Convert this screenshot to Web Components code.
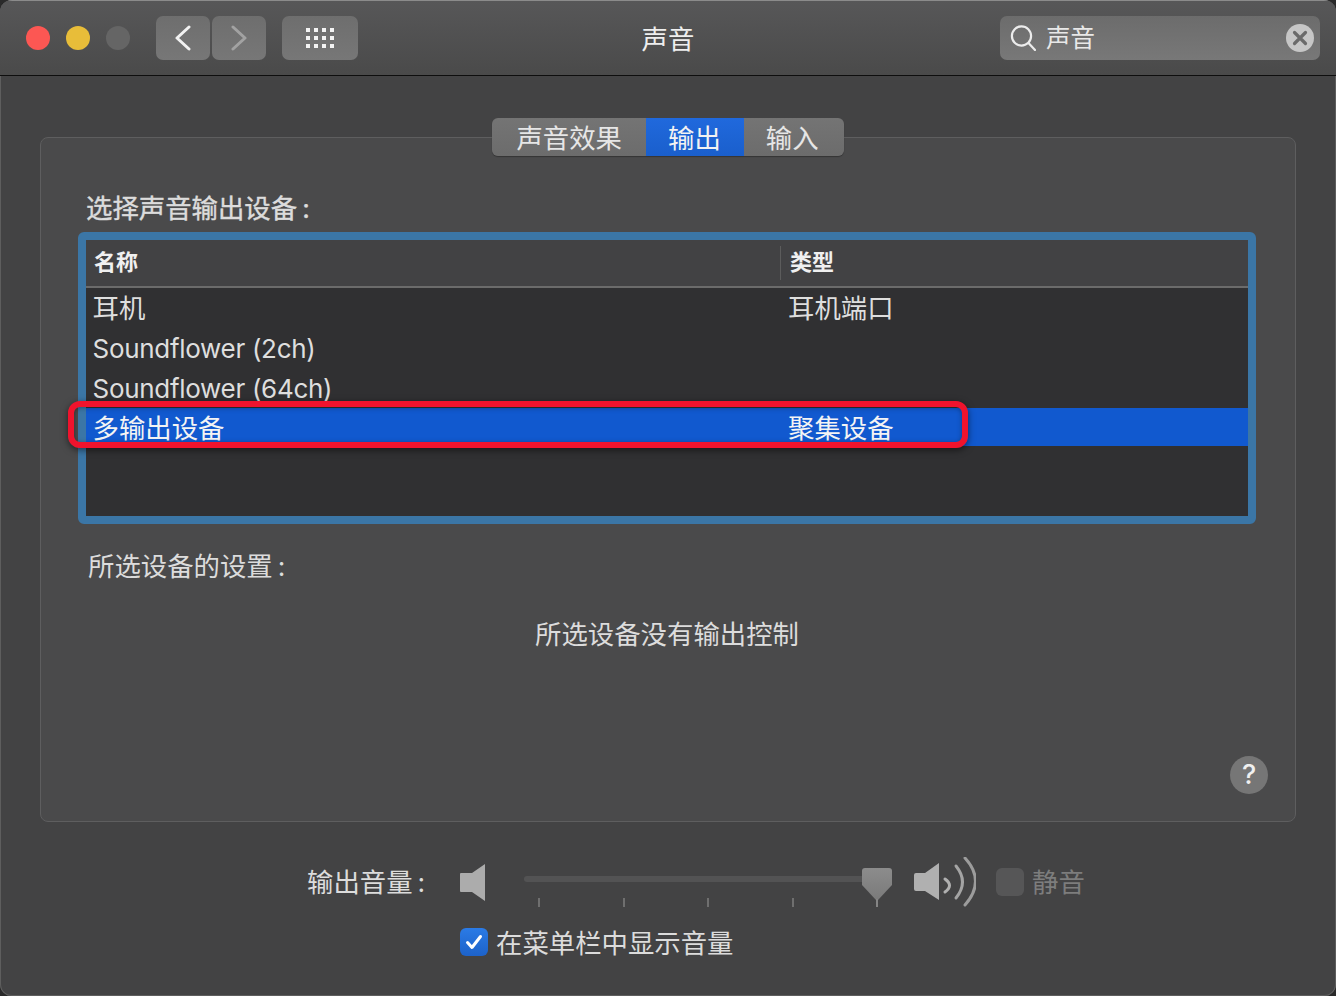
<!DOCTYPE html>
<html lang="zh">
<head>
<meta charset="utf-8">
<title>声音</title>
<style>
  html, body { margin: 0; padding: 0; background: #2a2a2a; }
  body { width: 1336px; height: 996px; overflow: hidden; font-family: Inter, "Noto Sans CJK SC", sans-serif; color: #dcdcdc; }
  .latin { font-size: 26px; letter-spacing: -.3px; }
</style>
</head>
<body>
<sound-window>
  <title-bar slot="top" heading="声音" query="声音"></title-bar>
  <tab-strip>
    <span>声音效果</span>
    <span data-active>输出</span>
    <span>输入</span>
  </tab-strip>
  <settings-panel>
    <device-table>
      <device-row><span>耳机</span><span slot="kind">耳机端口</span></device-row>
      <device-row><span class="latin">Soundflower (2ch)</span></device-row>
      <device-row><span class="latin">Soundflower (64ch)</span></device-row>
      <device-row selected><span>多输出设备</span><span slot="kind">聚集设备</span></device-row>
    </device-table>
  </settings-panel>
  <volume-controls></volume-controls>
</sound-window>

<script>
const FONT = 'Inter, "Noto Sans CJK SC", sans-serif';

class SoundWindow extends HTMLElement {
  connectedCallback() {
    this.attachShadow({ mode: 'open' });
    this.shadowRoot.innerHTML = `
      <style>
        :host { display: flex; flex-direction: column; width: 1336px; height: 996px; background: #434344; border-radius: 12px; overflow: hidden; box-shadow: inset 1px 0 #5e5e5e, inset -1px 0 #5e5e5e, inset 0 -1px #5e5e5e; }
        main { flex: 1; padding: 42px 40px 0; display: flex; flex-direction: column; }
      </style>
      <slot name="top"></slot>
      <main><slot></slot></main>
    `;
  }
}

class TitleBar extends HTMLElement {
  connectedCallback() {
    const heading = this.getAttribute('heading');
    const query = this.getAttribute('query');
    this.attachShadow({ mode: 'open' });
    this.shadowRoot.innerHTML = `
      <style>
        :host { display: block; box-sizing: border-box; height: 76px; border-top: 1px solid #8b8b8b; border-bottom: 1px solid #0e0e0e; background: linear-gradient(#575758, #4a4a4a); }
        .bar { display: grid; grid-template-columns: 1fr auto 1fr; align-items: center; height: 74px; padding: 0 16px; }
        .left { display: flex; align-items: center; padding-left: 10px; }
        .dot { width: 24px; height: 24px; border-radius: 50%; margin-right: 16px; }
        .btn { display: flex; align-items: center; justify-content: center; height: 44px; border-radius: 7px; background: linear-gradient(#6e6e6e, #777); }
        .back { width: 54px; margin-left: 10px; }
        .fwd { width: 54px; margin-left: 2px; }
        .apps { width: 76px; margin-left: 16px; }
        h1 { margin: 0; padding-top: 2px; font: 400 26.4px/34px ${FONT}; color: #eeeeee; }
        .search { justify-self: end; display: flex; align-items: center; box-sizing: border-box; width: 320px; height: 44px; padding: 0 6px 0 10px; border-radius: 7px; background: linear-gradient(#6c6c6c, #787878); color: #e8e8e8; font: 400 24.5px/34px ${FONT}; }
        .search span { flex: 1; margin-left: 10px; }
        svg { display: block; }
      </style>
      <div class="bar">
        <div class="left">
          <div class="dot" style="background:#fc5753"></div>
          <div class="dot" style="background:#e8bd39"></div>
          <div class="dot" style="background:#656565"></div>
          <div class="btn back"><svg width="16" height="26" viewBox="0 0 16 26"><path d="M14 2 2 13l12 11" fill="none" stroke="#f2f2f2" stroke-width="3" stroke-linecap="round" stroke-linejoin="round"/></svg></div>
          <div class="btn fwd"><svg width="16" height="26" viewBox="0 0 16 26"><path d="M2 2l12 11L2 24" fill="none" stroke="#a2a2a2" stroke-width="3" stroke-linecap="round" stroke-linejoin="round"/></svg></div>
          <div class="btn apps"><svg width="28" height="20" viewBox="0 0 28 20" fill="#f4f4f4">
            <rect x="0" y="0" width="4" height="4"/><rect x="8" y="0" width="4" height="4"/><rect x="16" y="0" width="4" height="4"/><rect x="24" y="0" width="4" height="4"/>
            <rect x="0" y="8" width="4" height="4"/><rect x="8" y="8" width="4" height="4"/><rect x="16" y="8" width="4" height="4"/><rect x="24" y="8" width="4" height="4"/>
            <rect x="0" y="16" width="4" height="4"/><rect x="8" y="16" width="4" height="4"/><rect x="16" y="16" width="4" height="4"/><rect x="24" y="16" width="4" height="4"/>
          </svg></div>
        </div>
        <h1>${heading}</h1>
        <div class="search">
          <svg width="26" height="26" viewBox="0 0 26 26" fill="none" stroke="#ececec" stroke-width="2.2"><circle cx="11.5" cy="11" r="9.6"/><path d="M18.5 18l6.5 7" stroke-linecap="round"/></svg>
          <span>${query}</span>
          <svg width="28" height="28" viewBox="0 0 28 28"><circle cx="14" cy="14" r="14" fill="#c6c6c6"/><path d="M8.5 8.5l11 11m0-11l-11 11" stroke="#6a6a6a" stroke-width="3.2" stroke-linecap="round"/></svg>
        </div>
      </div>
    `;
  }
}

class TabStrip extends HTMLElement {
  connectedCallback() {
    this.attachShadow({ mode: 'open' });
    this.shadowRoot.innerHTML = `
      <style>
        :host { display: flex; align-self: center; height: 38px; margin-bottom: -19px; position: relative; z-index: 1; border-radius: 6px; overflow: hidden; background: linear-gradient(#747474, #6c6c6c); box-shadow: 0 1px 1px rgba(0,0,0,.3); font: 400 26.4px/40px ${FONT}; color: #e6e6e6; }
        ::slotted(span) { display: block; padding: 0 24px; }
        ::slotted(span:last-child) { padding: 0 25px 0 22px; }
        ::slotted(span[data-active]) { padding: 0 23px 0 22px; background: linear-gradient(#2069dd, #1a5fcc); color: #f2f2f2; }
      </style>
      <slot></slot>
    `;
  }
}

class SettingsPanel extends HTMLElement {
  connectedCallback() {
    this.attachShadow({ mode: 'open' });
    this.shadowRoot.innerHTML = `
      <style>
        :host { display: flex; flex-direction: column; box-sizing: border-box; height: 685px; padding: 53px 39px 27px 37px; border: 1px solid #5e5e5f; border-radius: 8px; background: #4a4a4b; font: 400 26.4px/34px ${FONT}; color: #dcdcdc; }
        .title { margin: 0 0 7px 8px; -webkit-text-stroke: .4px currentColor; }
        .sub { margin: 25px 0 0 10px; }
        .none { margin: 34px 0 0; text-align: center; }
        .c { margin-left: 5px; }
        .help { align-self: flex-end; margin-top: auto; margin-right: -12px; width: 38px; height: 38px; border-radius: 50%; background: #767676; color: #f0f0f0; font: 500 27px/38px Inter, sans-serif; text-align: center; }
      </style>
      <div class="title">选择声音输出设备<span class="c">:</span></div>
      <slot></slot>
      <div class="sub">所选设备的设置<span class="c">:</span></div>
      <div class="none">所选设备没有输出控制</div>
      <div class="help">?</div>
    `;
  }
}

class DeviceTable extends HTMLElement {
  connectedCallback() {
    this.attachShadow({ mode: 'open' });
    this.shadowRoot.innerHTML = `
      <style>
        :host { display: block; box-sizing: border-box; position: relative; height: 292px; border: 8px solid #3b76a6; border-radius: 6px; background: #303032; }
        .head { display: grid; grid-template-columns: 694px 1fr; height: 46px; background: #424244; border-bottom: 2px solid #6b6b6b; font: 700 22px/44px ${FONT}; color: #f0f0f0; }
        .head div { padding-left: 8px; }
        .head div + div { position: relative; padding-left: 10px; }
        .head div + div::before { content: ''; position: absolute; left: 0; top: 6px; height: 34px; width: 1px; background: #5c5c5c; }
        .mark { position: absolute; left: -18px; top: 161px; width: 900px; height: 47px; box-sizing: border-box; border: 6px solid #f0132d; border-radius: 12px; box-shadow: 0 2px 7px rgba(0,0,0,.55), inset 0 1px 5px rgba(0,0,0,.35); }
      </style>
      <div class="head"><div>名称</div><div>类型</div></div>
      <slot></slot>
      <div class="mark"></div>
    `;
  }
}

class DeviceRow extends HTMLElement {
  connectedCallback() {
    this.attachShadow({ mode: 'open' });
    this.shadowRoot.innerHTML = `
      <style>
        :host { display: grid; grid-template-columns: 695px 1fr; height: 38px; margin-bottom: 2px; padding-left: 7px; font: 400 26.4px/40px ${FONT}; color: #dedede; white-space: nowrap; }
        :host([selected]) { background: #1159cf; color: #f4f4f4; }
        .name { margin-left: -.5px; }
      </style>
      <div class="name"><slot></slot></div>
      <div class="kind"><slot name="kind"></slot></div>
    `;
  }
}

class VolumeControls extends HTMLElement {
  connectedCallback() {
    this.attachShadow({ mode: 'open' });
    this.shadowRoot.innerHTML = `
      <style>
        :host { display: block; margin-top: 35px; font: 400 26.4px/36px ${FONT}; color: #dcdcdc; }
        .row { display: flex; align-items: center; height: 50px; padding-left: 267px; }
        .label { width: 117px; white-space: nowrap; }
        .c { margin-left: 5px; }
        .low { margin-left: 36px; }
        .slider { position: relative; width: 368px; height: 50px; margin-left: 38px; }
        .track { width: 342px; height: 6px; margin-top: 19px; border-radius: 3px; background: #535354; }
        .ticks { display: flex; gap: 82.6px; margin: 16px 0 0 14px; }
        .ticks i { display: block; width: 2px; height: 9px; background: #6f6f6f; }
        .thumb { position: absolute; left: 338px; top: 11px; }
        .high { margin-left: 22px; }
        .mute { width: 28px; height: 28px; margin-left: 20px; border-radius: 6px; background: #565657; }
        .mute-label { margin-left: 8px; color: #7d7d7d; }
        .check-row { display: flex; align-items: center; height: 34px; margin: 18px 0 0 420px; }
        .check { width: 28px; height: 28px; border-radius: 6px; background: linear-gradient(#2b7be6, #1d62c9); }
        .check-row span { margin-left: 8px; padding-top: 2px; }
        svg { display: block; }
      </style>
      <div class="row">
        <div class="label">输出音量<span class="c">:</span></div>
        <svg class="low" width="26" height="38" viewBox="0 0 26 38"><path d="M1 10h11L25 1v37l-13-9H1a1 1 0 0 1-1-1V11a1 1 0 0 1 1-1z" fill="#acacac"/></svg>
        <div class="slider">
          <div class="track"></div>
          <div class="ticks"><i></i><i></i><i></i><i></i></div>
          <svg class="thumb" width="30" height="39" viewBox="0 0 30 39">
            <defs><linearGradient id="th" x1="0" y1="0" x2="0" y2="1"><stop offset="0" stop-color="#8c8c8c"/><stop offset="1" stop-color="#7a7a7a"/></linearGradient></defs>
            <path d="M3 0h24a3 3 0 0 1 3 3v14L16 32h-2L0 17V3a3 3 0 0 1 3-3z" fill="url(#th)"/>
            <rect x="14" y="31" width="2" height="8" fill="#858585"/>
          </svg>
        </div>
        <svg class="high" width="62" height="50" viewBox="0 0 62 50" fill="none">
          <path d="M2 16h9L25 6v37L11 34H2a2 2 0 0 1-2-2V18a2 2 0 0 1 2-2z" fill="#b0b0b0"/>
          <path d="M31 22Q40 28.500 31 35" stroke="#b0b0b0" stroke-width="3" stroke-linecap="round"/>
          <path d="M42 9Q55 25 42 41" stroke="#a4a4a4" stroke-width="3" stroke-linecap="round"/>
          <path d="M51 1Q72 24 51 48" stroke="#9c9c9c" stroke-width="3" stroke-linecap="round"/>
        </svg>
        <div class="mute"></div>
        <div class="mute-label">静音</div>
      </div>
      <div class="check-row">
        <div class="check"><svg width="28" height="28" viewBox="0 0 28 28"><path d="M7.500 14.500l4.500 5 8.500-11" fill="none" stroke="#fff" stroke-width="3" stroke-linecap="round" stroke-linejoin="round"/></svg></div>
        <span>在菜单栏中显示音量</span>
      </div>
    `;
  }
}

customElements.define('sound-window', SoundWindow);
customElements.define('title-bar', TitleBar);
customElements.define('tab-strip', TabStrip);
customElements.define('settings-panel', SettingsPanel);
customElements.define('device-table', DeviceTable);
customElements.define('device-row', DeviceRow);
customElements.define('volume-controls', VolumeControls);
</script>
</body>
</html>
